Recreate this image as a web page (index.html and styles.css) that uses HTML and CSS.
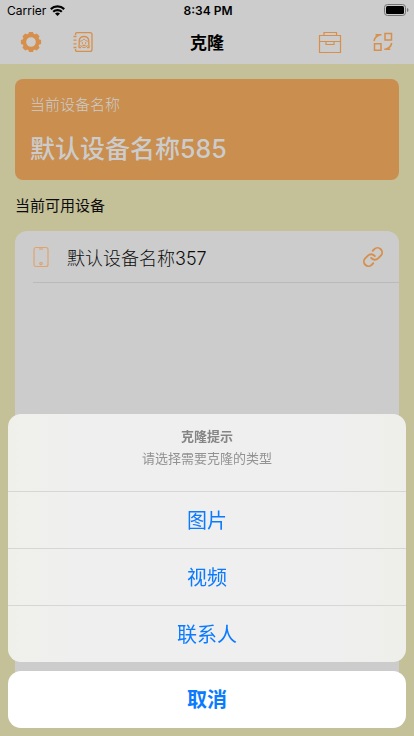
FILE: index.html
```html
<!DOCTYPE html>
<html lang="zh-CN">
<head>
<meta charset="utf-8">
<meta name="viewport" content="width=device-width, initial-scale=1">
<title>克隆</title>
<link rel="stylesheet" href="styles.css">
</head>
<body>
<div class="app">
  <header class="top">
    <div class="status">
      <div class="carrier">
        <span>Carrier</span>
        <svg width="15" height="11" viewBox="0 0 15 11" aria-hidden="true">
          <g fill="none" stroke="#000" stroke-width="2.200">
            <path d="M.8 4.100a9.600 9.600 0 0 1 13.400 0"/>
            <path d="M3.200 6.800a6.200 6.200 0 0 1 8.600 0"/>
          </g>
          <path d="M5 8.600a3.600 3.600 0 0 1 5 0L7.500 11z"/>
        </svg>
      </div>
      <span class="time">8:34 PM</span>
      <svg class="battery" width="25" height="12" viewBox="0 0 25 12" aria-hidden="true">
        <rect x=".5" y=".5" width="21" height="11" rx="3" fill="none" stroke="#747474"/>
        <rect x="2" y="2" width="18" height="8" rx="1.500"/>
        <path d="M23 4v4q1.500-.6 1.500-2T23 4z" fill="#747474"/>
      </svg>
    </div>
    <nav class="nav">
      <div class="group">
        <button class="icon" aria-label="设置">
          <svg width="22" height="22" viewBox="0 0 22 22">
            <circle cx="11" cy="11" r="6.600" fill="none" stroke="currentColor" stroke-width="3.600"/>
            <g fill="currentColor">
              <path id="tooth" d="M8 4 9 .9h4l1 3.100z"/>
              <use href="#tooth" transform="rotate(45 11 11)"/>
              <use href="#tooth" transform="rotate(90 11 11)"/>
              <use href="#tooth" transform="rotate(135 11 11)"/>
              <use href="#tooth" transform="rotate(180 11 11)"/>
              <use href="#tooth" transform="rotate(225 11 11)"/>
              <use href="#tooth" transform="rotate(270 11 11)"/>
              <use href="#tooth" transform="rotate(315 11 11)"/>
            </g>
          </svg>
        </button>
        <button class="icon" aria-label="联系人">
          <svg width="22" height="22" viewBox="0 0 22 22" fill="none" stroke="currentColor" stroke-width="1.300">
            <path d="M3.500 4V3.200Q3.500 1.600 5 1.600h13q2 0 2 2v14.800q0 2-2 2H5q-1.500 0-1.500-1.600V18"/>
            <path d="M1.500 5.500h3M1.500 9.200h3M1.500 12.800h3M1.500 16.500h3"/>
            <path d="M9 16.500H7.200q-.8-1 0-2.500V9.500Q7.800 5.500 12 5.500t4.800 4V14q.8 1.500 0 2.500H15"/>
            <path d="M7.500 10.500Q10.500 10 12 8q1.500 2 4.500 2.500M8.500 14q1.200 2.700 3.500 2.700t3.500-2.700" stroke-width=".9"/>
            <path d="M10.500 14q1.500 1.200 3 0M9.800 12h1.200M13 12h1.200"/>
          </svg>
        </button>
      </div>
      <h1 class="title">克隆</h1>
      <div class="group group-end">
        <button class="icon" aria-label="工具箱">
          <svg width="24" height="24" viewBox="0 0 24 24" fill="none" stroke="currentColor" stroke-width="1.200">
            <path d="M1.500 5.500h21v17h-21zM6 5.500v-3h12.500v3M1.500 11.500h21M8 11.500v3h8v-3"/>
          </svg>
        </button>
        <button class="icon" aria-label="传输">
          <svg width="22" height="22" viewBox="0 0 22 22" fill="none" stroke="currentColor" stroke-width="1.500">
            <path d="M13 2.500h6.500V9H13zM2.500 12.800H9v6.500H2.500zM2 10q.8-4.500 6-6.200M3.500 3.700h6M19.700 12q-.8 4.500-6 6.200M12.300 18.300h6"/>
          </svg>
        </button>
      </div>
    </nav>
  </header>
  <main class="content">
    <section class="device">
      <p class="device-label">当前设备名称</p>
      <p class="device-name">默认设备名称585</p>
    </section>
    <h2 class="heading">当前可用设备</h2>
    <ul class="list">
      <li class="row">
        <svg width="16" height="22" viewBox="0 0 16 22" fill="none" stroke="#dca470" stroke-width="1.200" aria-hidden="true">
          <rect x="1" y="1.500" width="14" height="19" rx="2"/>
          <path d="M6 3h4"/>
          <circle cx="8" cy="17.500" r="1.200"/>
        </svg>
        <span class="row-name">默认设备名称357</span>
        <button class="icon" aria-label="连接">
          <svg width="22" height="22" viewBox="0 0 24 24" fill="none" stroke="currentColor" stroke-width="2" stroke-linecap="round">
            <path d="M10 13a5 5 0 0 0 7.540.54l3-3a5 5 0 0 0-7.070-7.070l-1.720 1.710"/>
            <path d="M14 11a5 5 0 0 0-7.540-.54l-3 3a5 5 0 0 0 7.070 7.070l1.710-1.710"/>
          </svg>
        </button>
      </li>
    </ul>
  </main>
</div>
<div class="sheet" role="dialog" aria-labelledby="sheet-title">
  <div class="actions">
    <div class="prompt">
      <h2 class="prompt-title" id="sheet-title">克隆提示</h2>
      <p class="prompt-text">请选择需要克隆的类型</p>
    </div>
    <button class="action">图片</button>
    <button class="action">视频</button>
    <button class="action">联系人</button>
  </div>
  <button class="cancel">取消</button>
</div>
</body>
</html>
```
FILE: styles.css
```css
* {
  box-sizing: border-box;
  margin: 0;
  padding: 0;
}

body {
  font-family: Inter, "Noto Sans CJK SC", sans-serif;
  color: #0c0c0c;
  background: #c4c098;
}

button {
  font: inherit;
  border: 0;
  background: none;
}

svg {
  display: block;
}

.app {
  display: flex;
  flex-direction: column;
  min-height: 100vh;
}

.top {
  background: #ccc;
}

.status {
  display: grid;
  grid-template-columns: 1fr auto 1fr;
  align-items: center;
  height: 20px;
  padding: 0 5px 0 7px;
  font-size: 12px;
  color: #000;
}

.carrier {
  display: flex;
  align-items: center;
  gap: 4px;
}

.time {
  font-weight: 600;
}

.battery {
  justify-self: end;
}

.nav {
  display: grid;
  grid-template-columns: 1fr auto 1fr;
  align-items: center;
  height: 44px;
  padding: 0 20px;
}

.group {
  display: flex;
  align-items: center;
  gap: 30px;
}

.group-end {
  justify-content: flex-end;
}

.icon {
  color: #d68f4c;
}

.title {
  padding-bottom: 2px;
  font-size: 17px;
  font-weight: 600;
  color: #000;
}

.content {
  display: flex;
  flex: 1;
  flex-direction: column;
  padding: 15px;
}

.device {
  padding: 14px 15px 12px;
  border-radius: 8px;
  background: #ca8e4f;
  color: #ccc;
}

.device-label {
  font-size: 15px;
  font-weight: 300;
  line-height: 24px;
}

.device-name {
  margin-top: 14px;
  font-size: 25px;
  font-weight: 500;
  line-height: 37px;
}

.heading {
  margin: 14px 0 13px;
  font-size: 15px;
  font-weight: 400;
  line-height: 24px;
}

.list {
  flex: 1;
  border-radius: 12px;
  background: #ccc;
  list-style: none;
}

.row {
  display: flex;
  align-items: center;
  height: 52px;
  margin-left: 18px;
  padding-right: 15px;
  border-bottom: 1px solid #bababa;
}

.row-name {
  flex: 1;
  margin-left: 18px;
  font-size: 18px;
  font-weight: 300;
}

.sheet {
  position: fixed;
  right: 8px;
  bottom: 8px;
  left: 8px;
  display: grid;
  gap: 9px;
  text-align: center;
}

.actions {
  overflow: hidden;
  border-radius: 13px;
  background: linear-gradient(90deg, #f0f0eb, #efefef 16%, #efefef 82%, #eeeeea);
}

.prompt {
  height: 77px;
  padding-top: 11px;
  font-size: 13px;
  line-height: 22px;
  color: #858585;
}

.prompt-title {
  font-size: 13px;
  font-weight: 600;
}

.prompt-text {
  color: #929292;
}

.action,
.cancel {
  display: block;
  width: 100%;
  height: 57px;
  padding-bottom: 2px;
  font-size: 20px;
  color: #0a7aff;
}

.action {
  border-top: 1px solid #d6d6d5;
}

.cancel {
  border-radius: 13px;
  background: #fff;
  font-weight: 600;
}
```
